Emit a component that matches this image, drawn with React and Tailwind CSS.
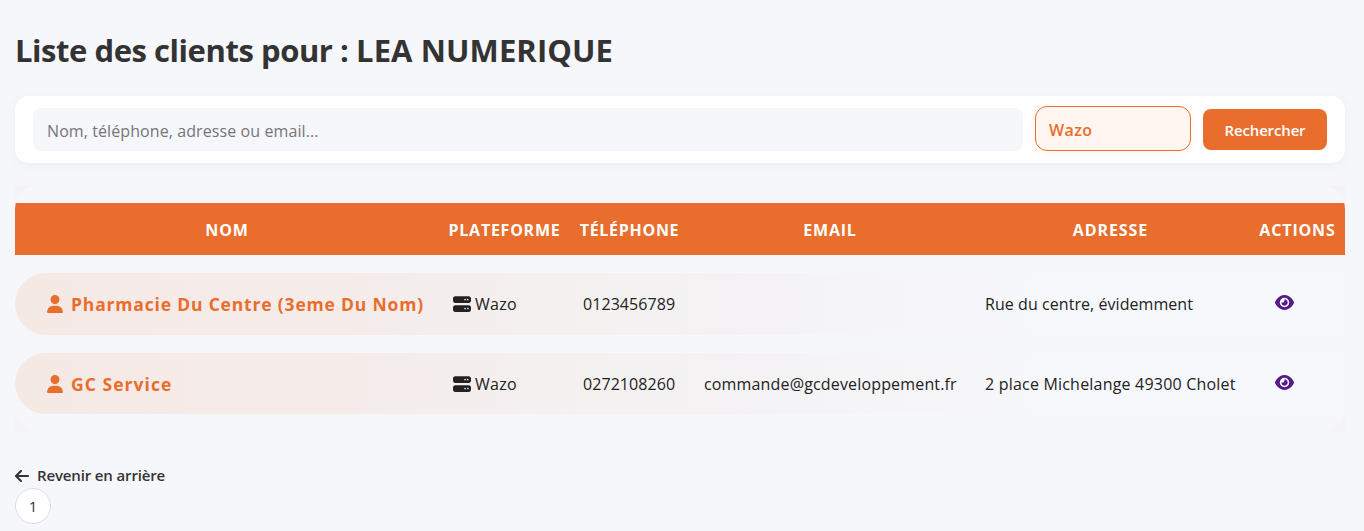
import { FaUser, FaServer, FaEye, FaArrowLeft } from "react-icons/fa6";

const GRID = "grid grid-cols-[424px_131px_119px_282px_279px_95px]";

const COLUMNS = [
  { label: "Nom", cls: "tracking-[0.9px]" },
  { label: "Plateforme", cls: "tracking-[0.75px]" },
  { label: "Téléphone", cls: "tracking-[0.7px]" },
  { label: "Email", cls: "tracking-[0.8px]" },
  { label: "Adresse", cls: "tracking-[0.9px]" },
  { label: "Actions", cls: "tracking-[0.85px]" },
];

const CLIENTS = [
  {
    name: "Pharmacie Du Centre (3eme Du Nom)",
    nameCls: "tracking-[0.82px]",
    phone: "0123456789",
    email: "",
    address: "Rue du centre, évidemment",
    addressCls: "tracking-[0.06px]",
    rowCls: "h-[62px]",
  },
  {
    name: "GC Service",
    nameCls: "tracking-[1.05px]",
    phone: "0272108260",
    email: "commande@gcdeveloppement.fr",
    address: "2 place Michelange 49300 Cholet",
    addressCls: "tracking-[0.2px]",
    rowCls: "h-[61px]",
  },
];

function SearchBar() {
  return (
    <form
      className="mt-[22px] flex h-[67px] items-center gap-3 rounded-[14px] bg-white px-[18px] shadow-[0_2px_12px_rgba(0,0,0,0.04)]"
      onSubmit={(e) => e.preventDefault()}
    >
      <input
        type="text"
        placeholder="Nom, téléphone, adresse ou email..."
        className="h-[43px] min-w-0 flex-1 rounded-lg bg-[#f6f7fb] px-[14px] pt-[3px] text-base tracking-[0.09px] text-[#333] outline-none placeholder:text-[#757575]"
      />
      <button
        type="button"
        className="mb-[2px] h-[45px] w-[156px] rounded-xl border border-[#e96d2c] bg-[#fff6f1] pl-[13px] pt-[3px] text-left text-base font-semibold tracking-[0.4px] text-[#e96d2c] shadow-[0_2px_8px_rgba(233,109,44,0.08)]"
      >
        Wazo
      </button>
      <button type="submit" className="h-[41px] w-[124px] rounded-lg bg-[#e96d2c] pt-[2px] text-[15px] font-semibold tracking-[-0.15px] text-white">
        Rechercher
      </button>
    </form>
  );
}

function ClientRow({ client }) {
  return (
    <div
      className={`${GRID} ${client.rowCls} items-center whitespace-nowrap rounded-l-[31px] bg-[linear-gradient(90deg,#f5e9e4_0%,#f5ecea_25%,#f4f0ef_38%,#f4f2f4_55%,#f7f8fc_78%,#f7f8fc_100%)] text-base text-[#222]`}
    >
      <div className="flex items-center pl-8 text-[#e96d2c]">
        <FaUser className="h-[18px] w-4 shrink-0" />
        <span className={`ml-2 pt-px text-[17.5px] font-bold ${client.nameCls}`}>{client.name}</span>
      </div>
      <div className="flex items-center pl-[14px]">
        <FaServer className="size-[18px] shrink-0" />
        <span className="ml-1 tracking-[0.3px]">{client.platform ?? "Wazo"}</span>
      </div>
      <div className="pl-[13px] tracking-[0.06px]">{client.phone}</div>
      <div className="pl-[15px] tracking-[0.16px]">{client.email}</div>
      <div className={`pl-[14px] ${client.addressCls}`}>{client.address}</div>
      <div className="pb-[3px] pl-[24.5px]">
        <FaEye className="h-[17px] w-[19px] text-[#551a8b]" />
      </div>
    </div>
  );
}

export default function App() {
  return (
    <main className="h-[531px] overflow-hidden bg-[#f6f7fb] px-[15px] pr-[19px] pt-[26px] font-['Open_Sans','Noto_Sans',sans-serif] text-[#333]">
      <h1 className="h-12 text-[31px] font-bold leading-[48px] tracking-[-0.45px]">
        Liste des clients pour : <span className="tracking-[0.1px]">LEA NUMERIQUE</span>
      </h1>
      <SearchBar />

      <div className="mt-[22px] h-[247px] bg-[#f5f3f5]">
        <div className="h-full overflow-hidden rounded-[24px] bg-[#f6f7fb] pt-[18px]">
          <div className={`${GRID} h-[52px] items-center bg-[#e96d2c] pt-[2px] text-center text-base font-bold uppercase text-white`}>
            {COLUMNS.map((c) => (
              <div key={c.label} className={c.cls}>
                {c.label}
              </div>
            ))}
          </div>
          <div className="mt-[18px] flex flex-col gap-[18px]">
            {CLIENTS.map((c) => (
              <ClientRow key={c.name} client={c} />
            ))}
          </div>
        </div>
      </div>

      <a href="#" className="mt-[31px] flex h-[25px] items-center text-[15px] font-semibold tracking-[-0.14px]">
        <FaArrowLeft className="h-4 w-[14px]" />
        <span className="ml-2">Revenir en arrière</span>
      </a>
      <div className="flex size-9 items-center justify-center rounded-full border border-[#dddddd] bg-white pt-px text-[15px]">
        1
      </div>
    </main>
  );
}
